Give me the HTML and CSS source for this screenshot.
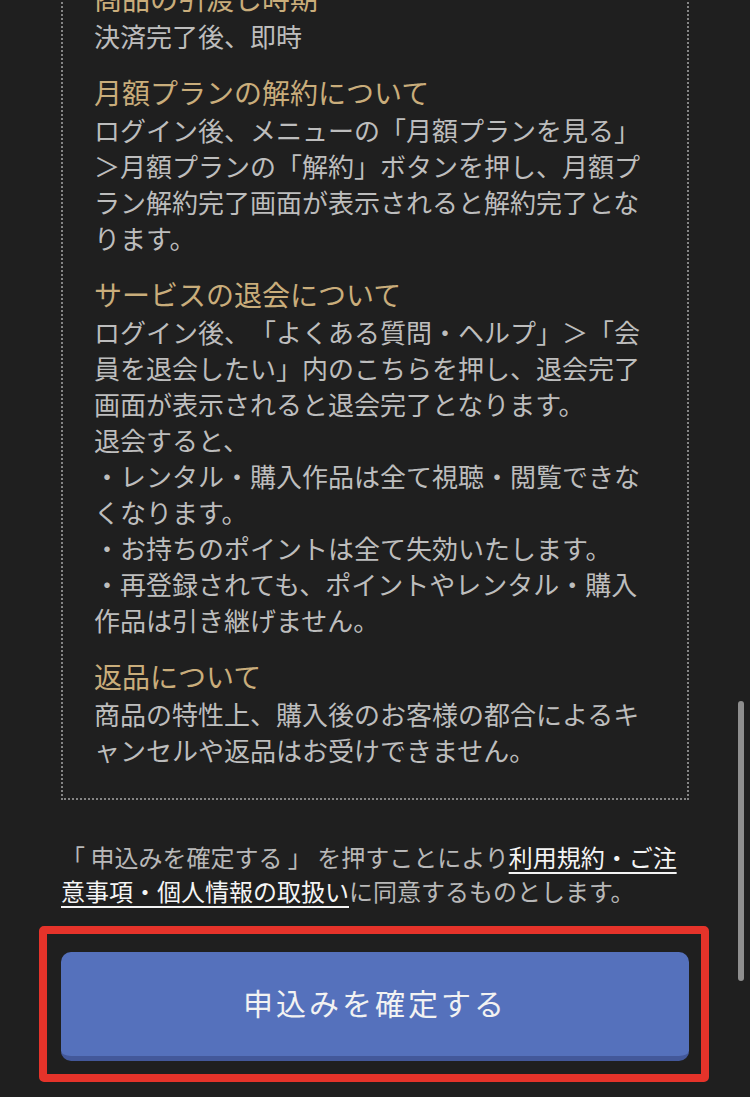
FILE: index.html
```html
<!DOCTYPE html>
<html lang="ja">
<head>
<meta charset="utf-8">
<title>申込み確認</title>
<link rel="stylesheet" href="styles.css">
</head>
<body>
<main class="page">
  <section class="notes">
    <div class="item">
      <h3 class="item-title">商品の引渡し時期</h3>
      <p class="item-body">決済完了後、即時</p>
    </div>
    <div class="item">
      <h3 class="item-title">月額プランの解約について</h3>
      <p class="item-body">ログイン後、メニューの「月額プランを見る」＞月額プランの「解約」ボタンを押し、月額プラン解約完了画面が表示されると解約完了となります。</p>
    </div>
    <div class="item">
      <h3 class="item-title">サービスの退会について</h3>
      <p class="item-body">ログイン後、「よくある質問・ヘルプ」＞「会員を退会したい」内のこちらを押し、退会完了画面が表示されると退会完了となります。<br>退会すると、<br>・レンタル・購入作品は全て視聴・閲覧できなくなります。<br>・お持ちのポイントは全て失効いたします。<br>・再登録されても、ポイントやレンタル・購入作品は引き継げません。</p>
    </div>
    <div class="item">
      <h3 class="item-title">返品について</h3>
      <p class="item-body">商品の特性上、購入後のお客様の都合によるキャンセルや返品はお受けできません。</p>
    </div>
  </section>

  <p class="consent">「 申込みを確定する 」 を押すことにより<a class="consent-link" href="#">利用規約・ご注意事項・個人情報の取扱い</a>に同意するものとします。</p>

  <div class="submit-wrap">
    <button class="submit" type="button">申込みを確定する</button>
    <div class="highlight"></div>
  </div>
</main>
<div class="scrollbar"></div>
</body>
</html>
```

FILE: styles.css
```css
html, body {
  margin: 0;
  padding: 0;
  background: #1f1f1f;
}

body {
  width: 750px;
  height: 1097px;
  overflow: hidden;
  font-family: "Noto Sans CJK JP", "Noto Sans", sans-serif;
  color: #bdbdbd;
  line-break: normal;
  text-spacing-trim: space-all;
}

.page {
  padding: 0 61px;
}

.notes {
  margin-top: -54px;
  border: 2px dotted #858585;
  padding: 30px 31px 30px;
}

.item {
  margin-bottom: 18px;
}

.item:last-child {
  margin-bottom: 0;
}

.item-title {
  margin: 0;
  font-size: 28px;
  line-height: 40px;
  font-weight: 400;
  color: #c9ad7b;
}

.item-body {
  margin: 0;
  font-size: 26px;
  line-height: 36px;
  color: #bdbdbd;
}

.consent {
  margin: 40px 0 0;
  font-size: 24px;
  line-height: 34px;
  color: #b8b8b8;
}

.consent-link {
  color: #f4f4f4;
  text-decoration: underline;
  text-decoration-thickness: 2px;
  text-underline-offset: 5px;
}

.submit-wrap {
  position: relative;
  margin-top: 44px;
}

.submit {
  display: block;
  width: 100%;
  height: 109px;
  margin: 0;
  padding: 0 0 4px;
  border: none;
  border-bottom: 5px solid #43589a;
  border-radius: 10px;
  background: #5571bc;
  color: #f2f2f2;
  font-family: "Noto Sans CJK JP", "Noto Sans", sans-serif;
  font-size: 30px;
  font-weight: 400;
  letter-spacing: 3px;
}

.highlight {
  position: absolute;
  top: -26px;
  left: -22px;
  right: -20px;
  bottom: -21px;
  border: 8px solid #e5332a;
  border-radius: 5px;
  pointer-events: none;
}

.scrollbar {
  position: fixed;
  top: 701px;
  right: 6px;
  width: 6px;
  height: 280px;
  border-radius: 3px;
  background: #8e8e8e;
}
```
